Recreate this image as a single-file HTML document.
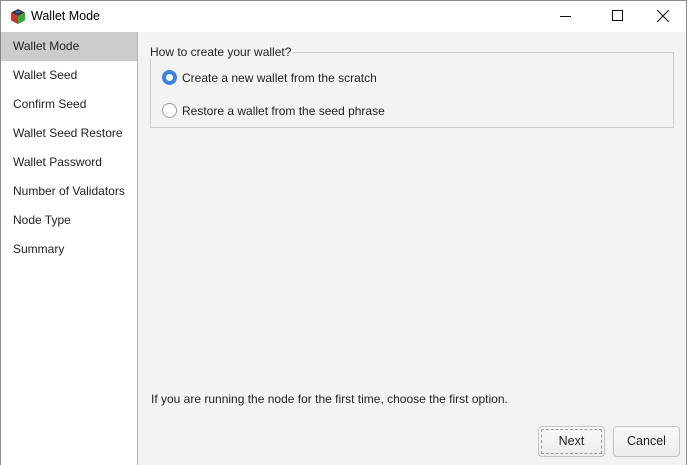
<!DOCTYPE html>
<html><head><style>
*{margin:0;padding:0;box-sizing:border-box}
body{width:687px;height:465px;overflow:hidden;font-family:"Liberation Sans",sans-serif;font-size:12px;color:#222;background:#fff}
.win{position:absolute;left:0;top:0;width:687px;height:465px;border:1px solid #8a8a8a}
.title{position:absolute;left:0;top:0;width:685px;height:31px;background:#fff}
.title .t{position:absolute;left:30px;top:8px;font-size:12.5px;color:#000}
.side{position:absolute;left:0;top:31px;width:137px;height:433px;background:#fff;border-right:1px solid #b8b8b8}
.it{position:absolute;left:0;width:136px;height:29px;line-height:29px;padding-left:12px}
.sel{background:#cccccc}
.main{position:absolute;left:137px;top:31px;width:548px;height:433px;background:#f4f3f2}
.grp{position:absolute;left:12px;top:20px;width:524px;height:76px;border:1px solid #d0d0d0}
.leg{position:absolute;left:12px;top:13px;background:#f4f3f2;padding-right:2px}
.r{position:absolute;left:24px;width:15px;height:15px;border-radius:50%;border:1px solid #9a9a9a;background:#fff}
.r.on{border:4px solid #3b82e0;background:#fff}
.rl{position:absolute;left:44px}
.btn{position:absolute;top:394px;width:67px;height:31px;border:1px solid #c4c4c4;border-radius:4px;background:linear-gradient(#f9f9f9,#ededed);text-align:center;line-height:29px;font-size:12.5px}
</style></head><body><div class="win">
<div class="title">
<svg style="position:absolute;left:10px;top:8px" width="14" height="15" viewBox="0 0 14 15"><polygon points="7,0 14,3.5 7,7 0,3.5" fill="#333"/><polygon points="0,3.5 7,7 7,15 0,11.5" fill="#c33"/><polygon points="14,3.5 7,7 7,15 14,11.5" fill="#3a3"/><rect x="5" y="2" width="4" height="2" fill="#36c"/></svg>
<span class="t">Wallet Mode</span>
<div style="position:absolute;left:559px;top:15px;width:11px;height:1px;background:#111"></div>
<div style="position:absolute;left:611px;top:9px;width:11px;height:11px;border:1px solid #111"></div>
<svg style="position:absolute;left:656px;top:9px" width="12" height="12"><path d="M0 0L12 12M12 0L0 12" stroke="#111" stroke-width="1.1"/></svg>
</div>
<div class="side">
<div class="it sel" style="top:0">Wallet Mode</div>
<div class="it" style="top:29px">Wallet Seed</div>
<div class="it" style="top:58px">Confirm Seed</div>
<div class="it" style="top:87px">Wallet Seed Restore</div>
<div class="it" style="top:116px">Wallet Password</div>
<div class="it" style="top:145px">Number of Validators</div>
<div class="it" style="top:174px">Node Type</div>
<div class="it" style="top:203px">Summary</div>
</div>
<div class="main">
<div class="grp"></div>
<div class="leg">How to create your wallet?</div>
<div class="r on" style="top:38px"></div><div class="rl" style="top:39px">Create a new wallet from the scratch</div>
<div class="r" style="top:71px"></div><div class="rl" style="top:72px">Restore a wallet from the seed phrase</div>
<div style="position:absolute;left:13px;top:360px">If you are running the node for the first time, choose the first option.</div>
<div class="btn" style="left:400px;outline:1px dashed #999;outline-offset:-4px">Next</div>
<div class="btn" style="left:475px">Cancel</div>
</div>
</div></body></html>
